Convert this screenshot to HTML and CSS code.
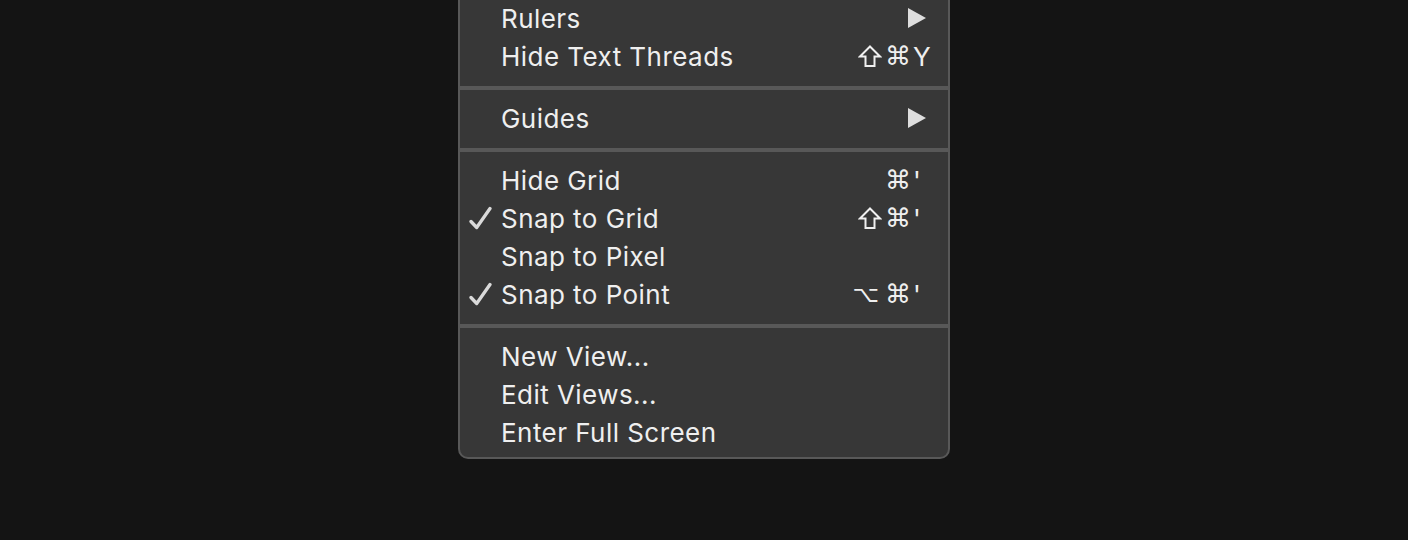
FILE: index.html
```html
<!DOCTYPE html>
<html lang="en">
<head>
<meta charset="utf-8">
<title>View menu</title>
<link rel="stylesheet" href="styles.css">
</head>
<body>
<div class="menu">
  <div class="item">
    <span class="check"></span>
    <span class="label">Rulers</span>
    <span class="submenu"><svg viewBox="0 0 18 20" width="18" height="20"><polygon points="0,0 18,10 0,20" fill="#dedede"/></svg></span>
  </div>
  <div class="item">
    <span class="check"></span>
    <span class="label">Hide Text Threads</span>
    <span class="mods"><svg class="shift" viewBox="0 0 24 23" width="24" height="23" aria-label="Shift"><polygon points="12,1.5 22,11.5 16.5,11.5 16.5,21 7.5,21 7.5,11.5 2,11.5" fill="none" stroke="#f0f0f0" stroke-width="2" stroke-linejoin="miter"/></svg><span class="cmd">⌘</span></span>
    <span class="key">Y</span>
  </div>
  <div class="sep"></div>
  <div class="item">
    <span class="check"></span>
    <span class="label">Guides</span>
    <span class="submenu"><svg viewBox="0 0 18 20" width="18" height="20"><polygon points="0,0 18,10 0,20" fill="#dedede"/></svg></span>
  </div>
  <div class="sep"></div>
  <div class="item">
    <span class="check"></span>
    <span class="label">Hide Grid</span>
    <span class="mods"><span class="cmd">⌘</span></span>
    <span class="key">'</span>
  </div>
  <div class="item">
    <span class="check"><svg viewBox="0 0 24 24" width="24" height="24"><polyline points="3,15.5 8.7,21.5 22,2.5" fill="none" stroke="#dadada" stroke-width="3.3" stroke-linecap="round" stroke-linejoin="round"/></svg></span>
    <span class="label">Snap to Grid</span>
    <span class="mods"><svg class="shift" viewBox="0 0 24 23" width="24" height="23" aria-label="Shift"><polygon points="12,1.5 22,11.5 16.5,11.5 16.5,21 7.5,21 7.5,11.5 2,11.5" fill="none" stroke="#f0f0f0" stroke-width="2" stroke-linejoin="miter"/></svg><span class="cmd">⌘</span></span>
    <span class="key">'</span>
  </div>
  <div class="item">
    <span class="check"></span>
    <span class="label">Snap to Pixel</span>
  </div>
  <div class="item">
    <span class="check"><svg viewBox="0 0 24 24" width="24" height="24"><polyline points="3,15.5 8.7,21.5 22,2.5" fill="none" stroke="#dadada" stroke-width="3.3" stroke-linecap="round" stroke-linejoin="round"/></svg></span>
    <span class="label">Snap to Point</span>
    <span class="mods"><span class="opt">⌥</span><span class="cmd">⌘</span></span>
    <span class="key">'</span>
  </div>
  <div class="sep"></div>
  <div class="item">
    <span class="check"></span>
    <span class="label">New View...</span>
  </div>
  <div class="item">
    <span class="check"></span>
    <span class="label">Edit Views...</span>
  </div>
  <div class="item">
    <span class="check"></span>
    <span class="label">Enter Full Screen</span>
  </div>
</div>
</body>
</html>
```
FILE: styles.css
```css
html, body {
  margin: 0;
  padding: 0;
  background: #141414;
  height: 100%;
  overflow: hidden;
}

body {
  font-family: Inter, "Noto Sans", "DejaVu Sans", sans-serif;
  color: #efefef;
}

.menu {
  box-sizing: border-box;
  width: 492px;
  margin: -9px 0 0 458px;
  padding: 6px 0;
  background: #373737;
  border: 2px solid #585858;
  border-radius: 10px;
}

.item {
  display: grid;
  grid-template-columns: 41px 1fr auto 18px;
  align-items: center;
  height: 38px;
  padding-right: 17px;
  font-size: 26px;
  line-height: 38px;
}

.check {
  grid-column: 1;
  display: flex;
  align-items: center;
  padding-left: 8px;
  height: 38px;
}

.check svg {
  display: block;
}

.label {
  grid-column: 2;
  white-space: nowrap;
  letter-spacing: 0.45px;
  position: relative;
  top: 1px;
}

.mods {
  grid-column: 3;
  justify-self: end;
  display: flex;
  align-items: center;
  gap: 3px;
  padding-right: 2px;
  font-family: "DejaVu Sans", sans-serif;
  font-size: 26px;
}

.shift {
  display: block;
}

.cmd,
.opt {
  display: block;
  line-height: 38px;
}

.opt {
  font-size: 23px;
  margin-right: 3px;
}

.key {
  grid-column: 4;
  justify-self: start;
  position: relative;
  top: 1px;
}

.submenu {
  grid-column: 3 / 5;
  justify-self: end;
  display: flex;
  align-items: center;
  margin-right: 5px;
}

.submenu svg {
  display: block;
}

.sep {
  height: 4px;
  margin: 11px 0 9px;
  background: #585858;
}
```
